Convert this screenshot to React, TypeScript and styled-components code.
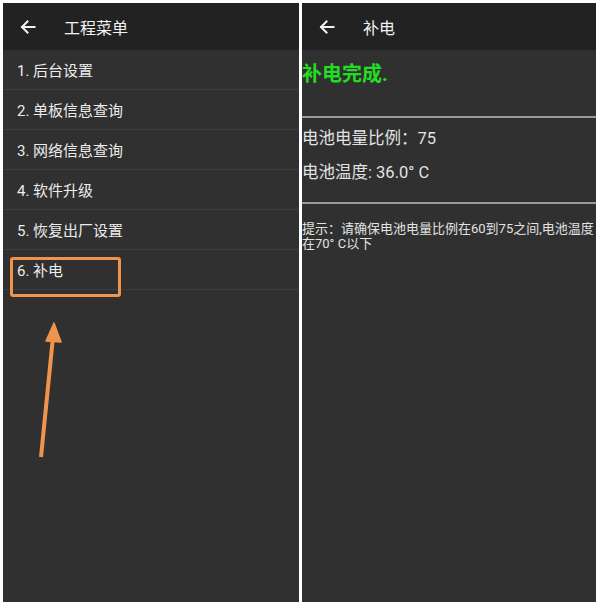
import React from 'react';
import styled, { createGlobalStyle } from 'styled-components';

const menuItems = ['1. 后台设置', '2. 单板信息查询', '3. 网络信息查询', '4. 软件升级', '5. 恢复出厂设置', '6. 补电'];

const BackArrow = () => (
  <svg width='16' height='16' viewBox='0 0 16 16' fill='none' stroke='#f2f2f2' strokeWidth='2' strokeLinecap='square'>
    <path d='M2 8h12.5' />
    <path d='M7.5 2.5 2 8 7.5 13.5' />
  </svg>
);

function App() {
  return (
    <Page>
      <GlobalStyle />
      <Panel $width={296}>
        <Header>
          <BackArrow />
          <HeaderTitle>工程菜单</HeaderTitle>
        </Header>
        <Menu>
          {menuItems.map((item) => (
            <MenuItem key={item}>{item}</MenuItem>
          ))}
        </Menu>
        <Highlight />
        <Pointer width='40' height='150' viewBox='0 0 40 150'>
          <path d='M14 142 L26 22' stroke='#f0944d' strokeWidth='4' strokeLinecap='butt' />
          <path d='M27 8 L19 26 L34 27 Z' fill='#f0944d' stroke='#f0944d' strokeWidth='1.5' strokeLinejoin='round' />
        </Pointer>
      </Panel>
      <Panel $width={294}>
        <Header>
          <BackArrow />
          <HeaderTitle>补电</HeaderTitle>
        </Header>
        <Status>补电完成.</Status>
        <Divider />
        <Values>
          <ValueLine>电池电量比例：75</ValueLine>
          <ValueLine>电池温度: 36.0° C</ValueLine>
        </Values>
        <Divider />
        <Hint>提示：请确保电池电量比例在60到75之间,电池温度在70° C以下</Hint>
      </Panel>
    </Page>
  );
}

const GlobalStyle = createGlobalStyle`
  body {
    margin: 0;
    background: #ffffff;
    font-family: Roboto, 'Noto Sans CJK SC', sans-serif;
  }
`;

const Page = styled.div`
  width: 600px;
  height: 606px;
  box-sizing: border-box;
  padding: 3px 4px 4px 3px;
  display: flex;
  gap: 3px;
  background: #ffffff;
`;

const Panel = styled.div<{ $width: number }>`
  position: relative;
  width: ${(props) => props.$width}px;
  flex-shrink: 0;
  display: flex;
  flex-direction: column;
  background: #303030;
  overflow: hidden;
`;

const Header = styled.div`
  height: 47px;
  flex-shrink: 0;
  display: flex;
  align-items: center;
  gap: 28px;
  padding-left: 17px;
  background: #222222;
`;

const HeaderTitle = styled.span`
  color: #f2f2f2;
  font-size: 16px;
`;

const Menu = styled.div`
  display: flex;
  flex-direction: column;
`;

const MenuItem = styled.div`
  height: 39px;
  display: flex;
  align-items: center;
  padding-left: 14px;
  color: #ececec;
  font-size: 15px;
  border-bottom: 1px solid #3e3e3e;
`;

const Highlight = styled.div`
  position: absolute;
  left: 7px;
  top: 254px;
  width: 111px;
  height: 40px;
  box-sizing: border-box;
  border: 3px solid #f0944d;
  border-radius: 3px;
`;

const Pointer = styled.svg`
  position: absolute;
  left: 24px;
  top: 312px;
`;

const Status = styled.div`
  height: 66px;
  box-sizing: border-box;
  padding-top: 12px;
  color: #22dd22;
  font-size: 20px;
  font-weight: 700;
  line-height: 24px;
`;

const Divider = styled.div`
  height: 2px;
  background: #9a9a9a;
`;

const Values = styled.div`
  display: flex;
  flex-direction: column;
  gap: 10px;
  padding: 9px 0 17px;
`;

const ValueLine = styled.div`
  color: #e2e2e2;
  font-size: 16.5px;
  line-height: 24px;
`;

const Hint = styled.div`
  padding-top: 17px;
  color: #e2e2e2;
  font-size: 13px;
  line-height: 15px;
`;

export default App;
